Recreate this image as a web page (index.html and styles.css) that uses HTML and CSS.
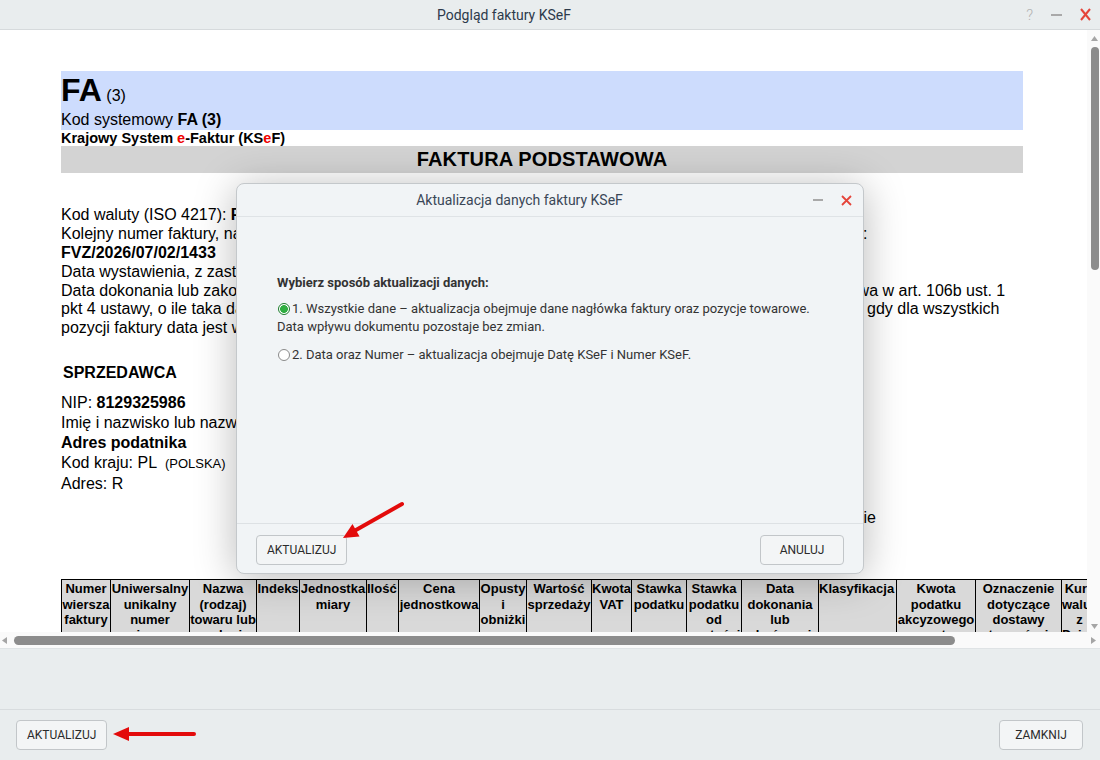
FILE: index.html
```html
<!DOCTYPE html>
<html lang="pl">
  <head>
    <meta charset="UTF-8" />
    <title>Podgląd faktury KSeF</title>
    <link rel="stylesheet" href="styles.css">
  </head>
  <body>
    <div class="app">
      <header class="titlebar">
        <span class="title">Podgląd faktury KSeF</span>
        <div class="win-ctrls">
          <span class="help">?</span>
          <span class="min"></span>
          <svg class="close" width="11" height="13" viewBox="0 0 11 13"><path d="M1 1 L10 12 M10 1 L1 12" stroke="#e5453a" stroke-width="2" fill="none"/></svg>
        </div>
      </header>

      <div class="viewer">
        <div class="viewport">
          <div class="doc">
            <div class="band-blue">
              <div class="fa"><b>FA</b> <span class="fa-ver">(3)</span></div>
              <div>Kod systemowy <b>FA (3)</b></div>
            </div>
            <div class="ksef">Krajowy System <span class="red">e</span>-Faktur (KS<span class="red">e</span>F)</div>
            <div class="band-grey">FAKTURA PODSTAWOWA</div>

            <div class="meta">
              <div class="line">Kod waluty (ISO 4217): <b>PLN</b></div>
              <div class="line wide">Kolejny numer faktury, nadany w ramach jednej lub więcej serii, który w sposób jednoznaczny identyfikuje fakturę:</div>
              <div class="line"><b>FVZ/2026/07/02/1433</b></div>
              <div class="line">Data wystawienia, z zastrzeżeniem art. 106na ust. 1 ustawy: <b>2026-07-02</b></div>
              <p class="para">Data dokonania lub zakończenia dostawy towarów lub wykonania usługi lub data otrzymania zapłaty, o której mowa w art. 106b ust. 1<br>pkt 4 ustawy, o ile taka data jest określona i różni się od daty wystawienia faktury. Pole wypełnia się w przypadku, gdy dla wszystkich<br>pozycji faktury data jest wspólna: <b>2026-07-02</b></p>
            </div>

            <div class="parties">
              <div class="party">
                <div class="party-head">SPRZEDAWCA</div>
                <div class="row">NIP: <b>8129325986</b></div>
                <div class="row">Imię i nazwisko lub nazwa: <b>ZAKŁAD</b></div>
                <div class="row"><b>Adres podatnika</b></div>
                <div class="row">Kod kraju: PL <span class="small">(POLSKA)</span></div>
                <div class="row">Adres: R</div>
              </div>
              <div class="party">
                <div class="party-head">NABYWCA</div>
                <div class="row">NIP: <b>5260250274</b></div>
                <div class="row">Nazwa: <b>KLIENT</b></div>
                <div class="row"><b>Adres</b></div>
                <div class="row">Kod kraju: PL <span class="small">(POLSKA)</span></div>
                <div class="row">Adres: W</div>
                <div class="row extra">Faktura dotyczy jednostki podrzędnej JST – nie</div>
              </div>
            </div>

            <table class="items">
              <tr>
                <th>Numer wiersza faktury</th>
                <th>Uniwersalny unikalny numer wiersza faktury</th>
                <th>Nazwa (rodzaj) towaru lub usługi</th>
                <th>Indeks</th>
                <th>Jednostka miary</th>
                <th>Ilość</th>
                <th>Cena jednostkowa</th>
                <th>Opusty i obniżki cen</th>
                <th>Wartość sprzedaży</th>
                <th>Kwota VAT</th>
                <th>Stawka podatku</th>
                <th>Stawka podatku od wartości dodanej</th>
                <th>Data dokonania lub zakończenia dostawy</th>
                <th>Klasyfikacja</th>
                <th>Kwota podatku akcyzowego zawarta w cenie</th>
                <th>Oznaczenie dotyczące dostawy towarów i usług</th>
                <th>Kurs waluty z Działu VI</th>
              </tr>
            </table>
          </div>
        </div>

        <div class="vscroll">
          <svg class="arr" width="7" height="5" viewBox="0 0 7 5"><path d="M0 5 L3.5 0 L7 5 Z" fill="#a5a5a5"/></svg>
          <div class="vthumb"></div>
          <svg class="arr down" width="7" height="5" viewBox="0 0 7 5"><path d="M0 0 L7 0 L3.5 5 Z" fill="#a5a5a5"/></svg>
        </div>
        <div class="hscroll">
          <svg class="arr" width="5" height="7" viewBox="0 0 5 7"><path d="M5 0 L5 7 L0 3.5 Z" fill="#a5a5a5"/></svg>
          <div class="hthumb"></div>
          <svg class="arr right" width="5" height="7" viewBox="0 0 5 7"><path d="M0 0 L5 3.5 L0 7 Z" fill="#a5a5a5"/></svg>
        </div>
      </div>

      <footer class="bottombar">
        <div class="bottom-space"></div>
        <div class="bottom-buttons">
          <button class="btn">AKTUALIZUJ</button>
          <button class="btn">ZAMKNIJ</button>
        </div>
      </footer>

      <div class="dialog">
        <div class="dlg-head">
          <span class="dlg-title">Aktualizacja danych faktury KSeF</span>
          <div class="dlg-ctrls">
            <span class="min"></span>
            <svg width="11" height="11" viewBox="0 0 11 11"><path d="M1 1 L10 10 M10 1 L1 10" stroke="#e5453a" stroke-width="1.8" fill="none"/></svg>
          </div>
        </div>
        <div class="dlg-body">
          <div class="dlg-label">Wybierz sposób aktualizacji danych:</div>
          <div class="option"><span class="radio checked"></span>1. Wszystkie dane – aktualizacja obejmuje dane nagłówka faktury oraz pozycje towarowe.<br>Data wpływu dokumentu pozostaje bez zmian.</div>
          <div class="option"><span class="radio"></span>2. Data oraz Numer – aktualizacja obejmuje Datę KSeF i Numer KSeF.</div>
        </div>
        <div class="dlg-foot">
          <button class="btn">AKTUALIZUJ</button>
          <button class="btn">ANULUJ</button>
        </div>
      </div>

      <!-- red arrows drawn on top of the screenshot -->
      <svg class="marks" width="1100" height="760" viewBox="0 0 1100 760">
        <line x1="402" y1="504" x2="356" y2="530" stroke="#e30b0b" stroke-width="4" stroke-linecap="round"/>
        <polygon points="343,538 359.5,536.5 352.5,524" fill="#e30b0b"/>
        <line x1="194" y1="734" x2="127" y2="734" stroke="#e30b0b" stroke-width="4" stroke-linecap="round"/>
        <polygon points="113,734 129,727 129,741" fill="#e30b0b"/>
      </svg>
    </div>
  </body>
</html>
```

FILE: styles.css
```css
* {
  margin: 0;
  padding: 0;
  box-sizing: border-box;
}

body {
  width: 1100px;
  height: 760px;
  overflow: hidden;
  background: #e9edee;
  font-family: Roboto, "Liberation Sans", sans-serif;
}

.app {
  position: relative;
  width: 1100px;
  height: 760px;
  display: flex;
  flex-direction: column;
}

/* window title */
.titlebar {
  height: 30px;
  border-bottom: 1px solid #d6dadc;
  background: #e9edee;
  display: flex;
  align-items: center;
}

.title {
  flex: 1;
  text-align: center;
  font-size: 14px;
  color: #2d3a4b;
}

.win-ctrls {
  width: 92px;
  display: flex;
  align-items: center;
  justify-content: flex-end;
  gap: 18px;
  padding-right: 9px;
}

.help {
  font-size: 15px;
  color: #b4b4b4;
  font-weight: 300;
}

.min {
  display: block;
  width: 11px;
  height: 2px;
  background: #a9a9a9;
}

/* document viewer */
.viewer {
  height: 618px;
  display: grid;
  grid-template-columns: 1fr 13px;
  grid-template-rows: 1fr 16px;
  background: #fff;
}

.viewport {
  overflow: hidden;
  background: #fff;
}

.doc {
  margin-left: 61px;
  width: 962px;
  padding-top: 41px;
  font-family: "Liberation Sans", Arial, sans-serif;
  font-size: 16px;
  color: #000;
}

.band-blue {
  background: #cddcfd;
  height: 59px;
}

.fa {
  line-height: 39px;
  height: 39px;
}

.fa b {
  font-size: 32px;
}

.fa-ver {
  font-size: 16px;
}

.band-blue div:last-child {
  line-height: 19px;
}

.ksef {
  font-size: 14.5px;
  font-weight: bold;
  line-height: 16px;
}

.red {
  color: #e00;
}

.band-grey {
  background: #d3d3d3;
  height: 27px;
  line-height: 27px;
  text-align: center;
  font-size: 20px;
  font-weight: bold;
  letter-spacing: 0.15px;
}

.meta {
  margin-top: 32px;
}

.line {
  line-height: 19px;
  white-space: nowrap;
}

.line.wide {
  word-spacing: 0.12px;
}

.para {
  margin-top: 1px;
  line-height: 18.4px;
  white-space: nowrap;
}

.parties {
  margin-top: 26px;
  padding-left: 2px;
  display: grid;
  grid-template-columns: 479px 1fr;
}

.party-head {
  font-weight: bold;
  line-height: 19px;
  margin-bottom: 11px;
}

.row {
  line-height: 20px;
  white-space: nowrap;
}

.party .row:nth-child(n+2) {
  margin-left: -2px;
}

.row.extra {
  margin-top: 14px;
}

.small {
  font-size: 13px;
  margin-left: 4px;
}

.items {
  margin-top: 51px;
  border-collapse: collapse;
  table-layout: fixed;
  width: 1036px;
}

.items th {
  background: #d9d9d9;
  border: 1px solid #000;
  font-size: 13px;
  line-height: 15.3px;
  font-weight: bold;
  vertical-align: top;
  height: 120px;
  padding: 1px 0 0;
  overflow: hidden;
}

.items th:nth-child(1) { width: 49px; }
.items th:nth-child(2) { width: 79px; }
.items th:nth-child(3) { width: 67px; }
.items th:nth-child(4) { width: 43px; }
.items th:nth-child(5) { width: 67px; }
.items th:nth-child(6) { width: 32px; text-align: left; }
.items th:nth-child(7) { width: 81px; }
.items th:nth-child(8) { width: 47px; }
.items th:nth-child(9) { width: 65px; }
.items th:nth-child(10) { width: 40px; }
.items th:nth-child(11) { width: 55px; }
.items th:nth-child(12) { width: 55px; }
.items th:nth-child(13) { width: 77px; }
.items th:nth-child(14) { width: 78px; text-align: left; }
.items th:nth-child(15) { width: 79px; }
.items th:nth-child(16) { width: 86px; }
.items th:nth-child(17) { width: 36px; }

/* scrollbars */
.vscroll {
  background: #fafafa;
  display: flex;
  flex-direction: column;
  align-items: center;
  padding: 6px 0 3px 2px;
}

.vthumb {
  margin-top: 6px;
  width: 8px;
  height: 223px;
  border-radius: 4px;
  background: #8c8c8c;
}

.vscroll .down {
  margin-top: auto;
}

.hscroll {
  grid-column: 1 / 3;
  background: #fafafa;
  display: flex;
  align-items: center;
  padding: 0 4px 0 2px;
}

.hthumb {
  margin-left: 7px;
  width: 941px;
  height: 9px;
  border-radius: 5px;
  background: #8c8c8c;
}

.hscroll .right {
  margin-left: auto;
}

/* bottom bar */
.bottombar {
  flex: 1;
  display: flex;
  flex-direction: column;
  background: #e9edee;
  border-top: 1px solid #dfe3e5;
}

.bottom-space {
  height: 61px;
  border-bottom: 1px solid #d8dcde;
}

.bottom-buttons {
  display: flex;
  justify-content: space-between;
  padding: 10px 17px 0 16px;
}

.btn {
  height: 30px;
  min-width: 84px;
  padding: 0 10px;
  border: 1px solid #c2c6c9;
  border-radius: 4px;
  background: #f3f5f6;
  font-family: Roboto, sans-serif;
  font-size: 12px;
  color: #2b2b2b;
}

/* modal dialog */
.dialog {
  position: absolute;
  left: 236px;
  top: 183px;
  width: 628px;
  height: 391px;
  display: flex;
  flex-direction: column;
  background: #f1f4f6;
  border: 1px solid #c4c8cb;
  border-radius: 8px;
  box-shadow: 0 4px 42px rgba(0, 0, 0, 0.28);
}

.dlg-head {
  height: 33px;
  border-bottom: 1px solid #dfe3e6;
  display: flex;
  align-items: center;
}

.dlg-title {
  flex: 1;
  text-align: center;
  font-size: 14px;
  color: #3a4757;
}

.dlg-ctrls {
  width: 61px;
  display: flex;
  align-items: center;
  justify-content: flex-end;
  gap: 18px;
  padding-right: 11px;
}

.dlg-ctrls .min {
  width: 10px;
  height: 1.5px;
}

.dlg-body {
  flex: 1;
  padding: 57px 40px 0;
  font-size: 13px;
  color: #333;
}

.dlg-label {
  font-weight: bold;
  line-height: 18px;
  margin-bottom: 8px;
}

.option {
  line-height: 18px;
  margin-bottom: 10px;
}

.radio {
  display: inline-block;
  width: 12px;
  height: 12px;
  border: 1px solid #8a8a8a;
  border-radius: 50%;
  background: #fff;
  vertical-align: -2px;
  margin: 0 2px 0 1px;
}

.radio.checked {
  border-color: #1c7d2b;
  background: radial-gradient(circle, #2fae41 0 3.6px, #fff 4.2px);
}

.dlg-foot {
  border-top: 1px solid #dde1e4;
  display: flex;
  justify-content: space-between;
  padding: 11px 19px 8px;
}

.marks {
  position: absolute;
  left: 0;
  top: 0;
  pointer-events: none;
}
```
